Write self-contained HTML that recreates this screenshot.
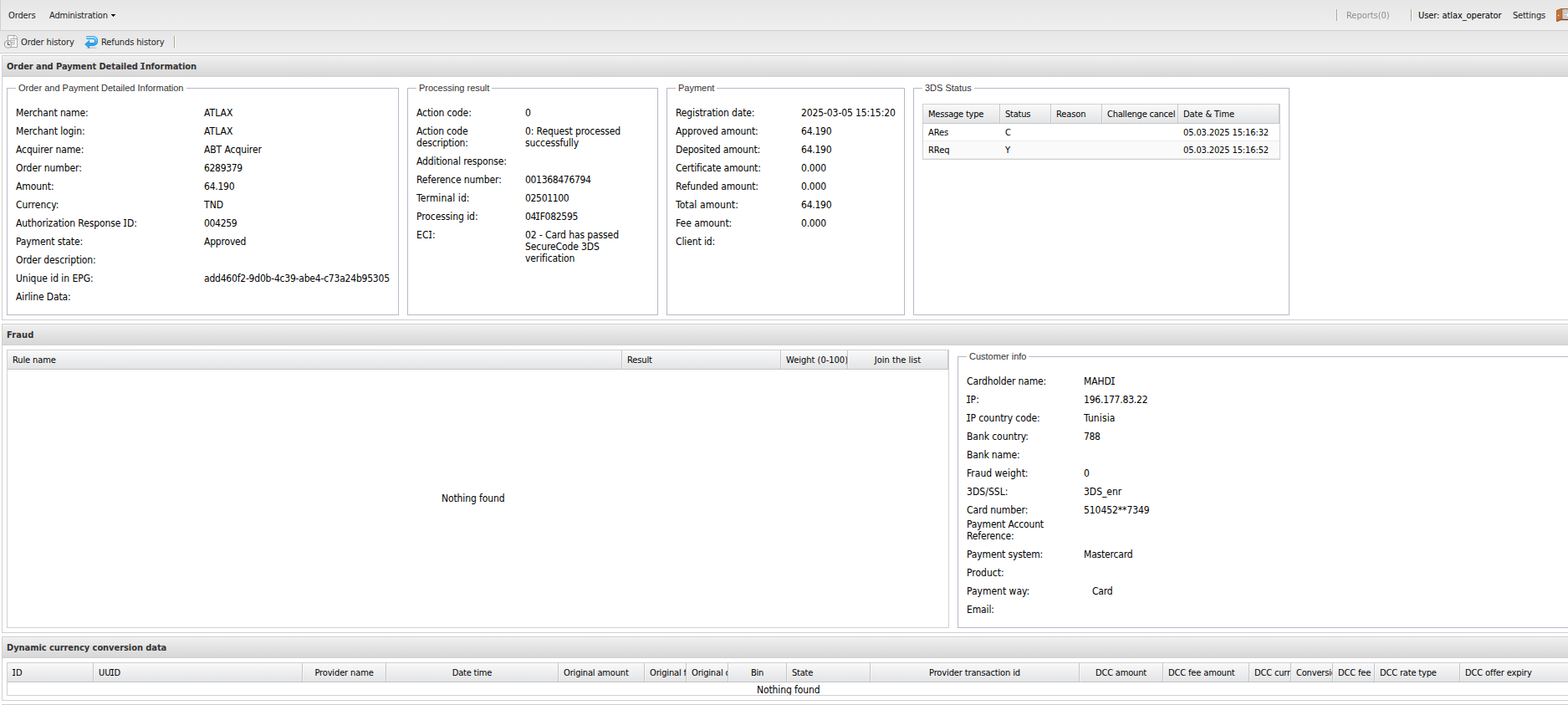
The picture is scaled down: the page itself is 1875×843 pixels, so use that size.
<!DOCTYPE html>
<html lang="en">
<head>
<meta charset="utf-8">
<title>Order and Payment Detailed Information</title>
<style>
*{box-sizing:border-box;margin:0;padding:0}
html,body{width:1875px;height:843px;overflow:hidden;background:#fff}
body{position:relative;font-family:"DejaVu Sans Condensed","Liberation Sans",sans-serif;font-size:12px;color:#000;line-height:14px;letter-spacing:-0.12px}
.abs{position:absolute}
#tb1{position:absolute;left:0;top:0;width:1875px;height:37px;border-left:1px solid #d0d0d0;border-bottom:1px solid #d0d0d0;background:linear-gradient(#e6e6e6,#efefef)}
#tb2{position:absolute;left:0;top:37px;width:1875px;height:27px;border-bottom:1px solid #d0d0d0;background:linear-gradient(#e6e6e6,#eeeeee)}
.tbt{position:absolute;font-size:11px;line-height:14px;white-space:nowrap;color:#222}
.sep{position:absolute;width:2px;height:14px;border-left:1px solid #a8a491;border-right:1px solid #fdfdfd}
.ph{position:absolute;left:2px;width:1880px;height:26px;border:1px solid #d0d0d0;background:linear-gradient(#f0f0f0,#d7d7d7);box-shadow:inset 0 1px 0 #f4f4f4}
.ph b{position:absolute;left:5px;top:5px;font-family:"DejaVu Sans Condensed","Liberation Sans",sans-serif;font-weight:bold;font-size:11px;line-height:15px;color:#333;white-space:nowrap}
.pb{position:absolute;left:2px;width:1880px;border:1px solid #d0d0d0;border-top:0;background:#fff}
.fs{position:absolute;border:1px solid #b5b8c8}
.lg{position:absolute;top:-8px;left:10px;padding:0 3px;background:#fff;font-family:"Liberation Sans",sans-serif;letter-spacing:0;font-size:11px;line-height:14px;color:#333;white-space:nowrap}
.l,.v{position:absolute;font-size:12px;line-height:14px;white-space:nowrap}
.gr{position:absolute;border:1px solid #d0d0d0;background:#fff;overflow:hidden}
.gh{position:absolute;left:0;top:0;height:23px;width:100%;border-bottom:1px solid #c5c5c5;background:linear-gradient(#f9f9f9,#e3e4e6)}
.gc{position:absolute;top:0;height:22px;border-right:1px solid #c5c5c5;box-shadow:inset 1px 0 0 rgba(255,255,255,.45);font-size:11px;line-height:24px;padding:0 6px;white-space:nowrap;overflow:hidden}
.gc.c{text-align:center}
.gc:first-child{box-shadow:none}
.row{position:absolute;left:0;width:100%;height:21px;font-size:11px;line-height:22px;border-bottom:1px solid #ededed}
.row.alt{background:#fafafa}
.row span{position:absolute;top:0;white-space:nowrap}
.I{display:inline-block;position:relative;width:.373em;text-align:center;letter-spacing:0;line-height:14px}
.I::before,.I::after{content:"";position:absolute;left:50%;margin-left:-2.1px;width:3.7px;height:1px;background:currentColor;top:2px}
.I::after{top:10px}
.gc .I,.row .I{line-height:13px}
.gc .I::after,.row .I::after{top:9px}
.gc .I::before,.gc .I::after,.row .I::before,.row .I::after{width:3.4px;margin-left:-2.2px}
.ph .I{width:.49em;line-height:15px}
.ph .I::before,.ph .I::after{width:5px;margin-left:-2.5px;top:3px}
.ph .I::after{top:10px}
.nf{position:absolute;font-size:12px;line-height:14px;white-space:nowrap}
</style>
</head>
<body>
<div id="tb1">
<span class="tbt" style="left:9px;top:12px;letter-spacing:-0.129px">Orders</span>
<span class="tbt" style="left:58px;top:12px;letter-spacing:-0.191px">Administration</span>
<span class="abs" style="left:132px;top:17px;width:5px;height:1px;background:#000"></span><span class="abs" style="left:133px;top:18px;width:3px;height:1px;background:#000"></span><span class="abs" style="left:134px;top:19px;width:1px;height:1px;background:#000"></span>
<span class="sep" style="left:1597px;top:11px"></span>
<span class="tbt" style="left:1609px;top:12px;letter-spacing:-0.028px;color:#111;opacity:.45;will-change:opacity;transform:translateZ(0)">Reports(0)</span>
<span class="sep" style="left:1686px;top:11px"></span>
<span class="tbt" style="left:1695px;top:12px;letter-spacing:-0.069px;color:#000">User: atlax_operator</span>
<span class="tbt" style="left:1808px;top:12px;letter-spacing:-0.211px">Settings</span>
<svg class="abs" style="left:1860px;top:10px" width="16" height="16" viewBox="0 0 16 16"><rect x="5.5" y="0" width="10.5" height="14" fill="#b5652a"/><rect x="6" y="13" width="10" height="1.2" fill="#7a2c22"/><rect x="7.2" y="1.2" width="8.8" height="11.6" fill="#cbcbcb"/><path d="M9.4 7.6H14.5M12.6 5.4L14.8 7.6L12.6 9.8" fill="none" stroke="#a8a8a8" stroke-width="2.4"/><path d="M9.4 7.6H14.5M12.6 5.4L14.8 7.6L12.6 9.8" fill="none" stroke="#fff" stroke-width="1.1"/><path d="M0.5 2.4L6.6 0.3V13.4L0.5 15.7Z" fill="#c47a3c" stroke="#a75c25" stroke-width="0.9" stroke-linejoin="round"/><path d="M2.5 2.2V14.6M4.5 1.5V13.9" stroke="#b56a30" stroke-width="0.6" fill="none"/><path d="M0.5 15.7L6.6 13.4V12.6L0.5 14.9Z" fill="#8f4a22"/><circle cx="2.6" cy="8.6" r="0.8" fill="#f4f4f4"/></svg>
</div>
<div id="tb2">
<svg class="abs" style="left:5px;top:5px" width="16" height="16" viewBox="0 0 16 16"><path d="M4.5 0.5H13.6L15.5 3V14.5H4.5Z" fill="#fdfdfd" stroke="#a9a9a9"/><path d="M11.6 0.8V4.4" fill="none" stroke="#b4b4b4"/><path d="M7 4.5H15M7 6.5H13M8.5 8.5H13M9.5 10.5H13" stroke="#adadad" fill="none"/><circle cx="4.6" cy="10.9" r="4.3" fill="#ecece8" stroke="#a2a2a2" stroke-width="1.15"/><path d="M4.5 8.2V11.5H7" fill="none" stroke="#555" stroke-width="1"/></svg>
<span class="tbt" style="left:25px;top:7px;letter-spacing:-0.124px">Order history</span>
<svg class="abs" style="left:101px;top:5px" width="16" height="16" viewBox="0 0 16 16"><defs><linearGradient id="rg" x1="0" y1="0" x2="0" y2="1"><stop offset="0" stop-color="#9fe3ff"/><stop offset="0.5" stop-color="#5cc0f6"/><stop offset="1" stop-color="#16a8fb"/></linearGradient></defs><ellipse cx="8.5" cy="15.4" rx="6.5" ry="0.9" fill="#000" opacity="0.16"/><path d="M2.5 2.9H10.2A4 4 0 0 1 10.2 10.9H5" fill="none" stroke="#2d8fdd" stroke-width="4" stroke-linejoin="round"/><path d="M0.5 11L5.8 6.2V15.8Z" fill="#2d8fdd" stroke="#2d8fdd" stroke-width="0.6" stroke-linejoin="round"/><path d="M3 2.9H10.2A4 4 0 0 1 10.2 10.9H5" fill="none" stroke="url(#rg)" stroke-width="2.4"/><path d="M1.9 11L5 8.2V13.8Z" fill="#22b0fc"/></svg>
<span class="tbt" style="left:121px;top:7px;letter-spacing:-0.109px">Refunds history</span>
<span class="sep" style="left:208px;top:6px"></span>
</div>
<div class="ph" style="top:66px"><b style="letter-spacing:-0.066px">Order and Payment Detailed <span class="I">I</span>nformation</b></div>
<div class="pb" style="top:92px;height:291px"></div>
<div class="fs" style="left:8px;top:105px;width:469px;height:272px"><span class="lg">Order and Payment Detailed Information</span>
<span class="l" style="left:10px;top:22px;letter-spacing:-0.127px">Merchant name:</span>
<span class="v" style="left:235px;top:22px;letter-spacing:0.050px">ATLAX</span>
<span class="l" style="left:10px;top:44px;letter-spacing:-0.100px">Merchant login:</span>
<span class="v" style="left:235px;top:44px;letter-spacing:0.050px">ATLAX</span>
<span class="l" style="left:10px;top:66px;letter-spacing:-0.114px">Acquirer name:</span>
<span class="v" style="left:235px;top:66px;letter-spacing:-0.089px">ABT Acquirer</span>
<span class="l" style="left:10px;top:88px;letter-spacing:-0.063px">Order number:</span>
<span class="v" style="left:235px;top:88px;letter-spacing:-0.315px">6289379</span>
<span class="l" style="left:10px;top:110px;letter-spacing:-0.088px">Amount:</span>
<span class="v" style="left:235px;top:110px;letter-spacing:-0.228px">64.190</span>
<span class="l" style="left:10px;top:132px;letter-spacing:-0.005px">Currency:</span>
<span class="v" style="left:235px;top:132px;letter-spacing:0.056px">TND</span>
<span class="l" style="left:10px;top:154px;letter-spacing:-0.104px">Authorization Response <span class="I">I</span>D:</span>
<span class="v" style="left:235px;top:154px;letter-spacing:-0.315px">004259</span>
<span class="l" style="left:10px;top:176px;letter-spacing:-0.118px">Payment state:</span>
<span class="v" style="left:235px;top:176px;letter-spacing:-0.191px">Approved</span>
<span class="l" style="left:10px;top:198px;letter-spacing:-0.120px">Order description:</span>
<span class="l" style="left:10px;top:220px;letter-spacing:-0.045px">Unique id in EPG:</span>
<span class="v" style="left:235px;top:220px;letter-spacing:-0.209px">add460f2-9d0b-4c39-abe4-c73a24b95305</span>
<span class="l" style="left:10px;top:242px;letter-spacing:-0.125px">Airline Data:</span>
</div>
<div class="fs" style="left:487px;top:105px;width:300px;height:272px"><span class="lg">Processing result</span>
<span class="l" style="left:10px;top:22px;letter-spacing:-0.099px">Action code:</span>
<span class="v" style="left:140px;top:22px;letter-spacing:-0.315px">0</span>
<span class="l" style="left:10px;top:44px;letter-spacing:-0.160px">Action code<br>description:</span>
<span class="v" style="left:140px;top:44px;letter-spacing:-0.104px">0: Request processed<br>successfully</span>
<span class="l" style="left:10px;top:80px;letter-spacing:-0.126px">Additional response:</span>
<span class="l" style="left:10px;top:102px;letter-spacing:-0.087px">Reference number:</span>
<span class="v" style="left:140px;top:102px;letter-spacing:-0.315px">001368476794</span>
<span class="l" style="left:10px;top:124px;letter-spacing:0.107px">Terminal id:</span>
<span class="v" style="left:140px;top:124px;letter-spacing:-0.315px">02501100</span>
<span class="l" style="left:10px;top:146px;letter-spacing:-0.076px">Processing id:</span>
<span class="v" style="left:140px;top:146px;letter-spacing:-0.276px">04<span class="I">I</span>F082595</span>
<span class="l" style="left:10px;top:168px;letter-spacing:0.064px">EC<span class="I">I</span>:</span>
<span class="v" style="left:140px;top:168px;letter-spacing:-0.100px">02 - Card has passed<br>SecureCode 3DS<br>verification</span>
</div>
<div class="fs" style="left:797px;top:105px;width:285px;height:272px"><span class="lg">Payment</span>
<span class="l" style="left:10px;top:22px;letter-spacing:-0.117px">Registration date:</span>
<span class="v" style="left:160px;top:22px;letter-spacing:-0.102px">2025-03-05 15:15:20</span>
<span class="l" style="left:10px;top:44px;letter-spacing:-0.122px">Approved amount:</span>
<span class="v" style="left:160px;top:44px;letter-spacing:-0.228px">64.190</span>
<span class="l" style="left:10px;top:66px;letter-spacing:-0.149px">Deposited amount:</span>
<span class="v" style="left:160px;top:66px;letter-spacing:-0.228px">64.190</span>
<span class="l" style="left:10px;top:88px;letter-spacing:-0.168px">Certificate amount:</span>
<span class="v" style="left:160px;top:88px;letter-spacing:-0.210px">0.000</span>
<span class="l" style="left:10px;top:110px;letter-spacing:-0.082px">Refunded amount:</span>
<span class="v" style="left:160px;top:110px;letter-spacing:-0.210px">0.000</span>
<span class="l" style="left:10px;top:132px;letter-spacing:0.089px">Total amount:</span>
<span class="v" style="left:160px;top:132px;letter-spacing:-0.228px">64.190</span>
<span class="l" style="left:10px;top:154px;letter-spacing:-0.035px">Fee amount:</span>
<span class="v" style="left:160px;top:154px;letter-spacing:-0.210px">0.000</span>
<span class="l" style="left:10px;top:176px;letter-spacing:-0.107px">Client id:</span>
</div>
<div class="fs" style="left:1092px;top:105px;width:450px;height:272px"><span class="lg">3DS Status</span></div>
<div class="gr" style="left:1103px;top:124px;width:428px;height:67px"><div class="gh">
<div class="gc" style="left:0px;width:92px;letter-spacing:-0.204px">Message type</div>
<div class="gc" style="left:92px;width:61px;letter-spacing:-0.207px">Status</div>
<div class="gc" style="left:153px;width:61px;letter-spacing:-0.102px">Reason</div>
<div class="gc" style="left:214px;width:91px;letter-spacing:-0.221px">Challenge cancel</div>
<div class="gc" style="left:305px;width:121px;letter-spacing:-0.080px">Date &amp; Time</div>
</div>
<div class="row" style="top:23px">
<span style="left:6px;letter-spacing:-0.068px">ARes</span>
<span style="left:98px;letter-spacing:-0.302px">C</span>
<span style="left:311px;letter-spacing:-0.118px">05.03.2025 15:16:32</span>
</div>
<div class="row alt" style="top:44px">
<span style="left:6px;letter-spacing:-0.025px">RReq</span>
<span style="left:98px;letter-spacing:0.294px">Y</span>
<span style="left:311px;letter-spacing:-0.118px">05.03.2025 15:16:52</span>
</div>
</div>
<div class="ph" style="top:387px"><b style="letter-spacing:0.15px">Fraud</b></div>
<div class="pb" style="top:413px;height:344px"></div>
<div class="gr" style="left:8px;top:418px;width:1127px;height:333px"><div class="gh">
<div class="gc" style="left:0px;width:735px;letter-spacing:-0.117px">Rule name</div>
<div class="gc" style="left:735px;width:190px;letter-spacing:-0.113px">Result</div>
<div class="gc" style="left:925px;width:80px;letter-spacing:-0.002px">Weight (0-100)</div>
<div class="gc c" style="left:1005px;width:120px;letter-spacing:0.020px">Join the list</div>
</div>
<span class="nf" style="left:519px;top:170px;letter-spacing:-0.108px">Nothing found</span>
</div>
<div class="fs" style="left:1145px;top:426px;width:800px;height:325px"><span class="lg">Customer info</span>
<span class="l" style="left:10px;top:22px;letter-spacing:-0.139px">Cardholder name:</span>
<span class="v" style="left:150px;top:22px;letter-spacing:-0.112px">MAHD<span class="I">I</span></span>
<span class="l" style="left:10px;top:44px;letter-spacing:0.356px"><span class="I">I</span>P:</span>
<span class="v" style="left:150px;top:44px;letter-spacing:-0.194px">196.177.83.22</span>
<span class="l" style="left:10px;top:66px;letter-spacing:-0.081px"><span class="I">I</span>P country code:</span>
<span class="v" style="left:150px;top:66px;letter-spacing:0.122px">Tunisia</span>
<span class="l" style="left:10px;top:88px;letter-spacing:-0.062px">Bank country:</span>
<span class="v" style="left:150px;top:88px;letter-spacing:-0.315px">788</span>
<span class="l" style="left:10px;top:110px;letter-spacing:-0.137px">Bank name:</span>
<span class="l" style="left:10px;top:132px;letter-spacing:-0.004px">Fraud weight:</span>
<span class="v" style="left:150px;top:132px;letter-spacing:-0.315px">0</span>
<span class="l" style="left:10px;top:154px;letter-spacing:0.064px">3DS/SSL:</span>
<span class="v" style="left:150px;top:154px;letter-spacing:-0.015px">3DS_enr</span>
<span class="l" style="left:10px;top:176px;letter-spacing:-0.085px">Card number:</span>
<span class="v" style="left:150px;top:176px;letter-spacing:-0.070px">510452**7349</span>
<span class="l" style="left:10px;top:193px;letter-spacing:-0.152px">Payment Account<br>Reference:</span>
<span class="l" style="left:10px;top:229px;letter-spacing:-0.149px">Payment system:</span>
<span class="v" style="left:150px;top:229px;letter-spacing:-0.190px">Mastercard</span>
<span class="l" style="left:10px;top:251px;letter-spacing:-0.001px">Product:</span>
<span class="l" style="left:10px;top:273px;letter-spacing:-0.006px">Payment way:</span>
<span class="v" style="left:160px;top:273px;letter-spacing:-0.192px">Card</span>
<span class="l" style="left:10px;top:295px;letter-spacing:-0.123px">Email:</span>
</div>
<div class="ph" style="top:761px"><b style="letter-spacing:-0.06px">Dynamic currency conversion data</b></div>
<div class="pb" style="top:787px;height:51px"></div>
<div class="gr" style="left:8px;top:792px;width:1900px;height:40px"><div class="gh">
<div class="gc" style="left:0px;width:103px;letter-spacing:-0.164px"><span class="I">I</span>D</div>
<div class="gc" style="left:103px;width:250px;letter-spacing:-0.074px">UU<span class="I">I</span>D</div>
<div class="gc c" style="left:353px;width:100px;letter-spacing:-0.131px">Provider name</div>
<div class="gc c" style="left:453px;width:206px;letter-spacing:-0.200px">Date time</div>
<div class="gc" style="left:659px;width:103px;letter-spacing:-0.158px">Original amount</div>
<div class="gc" style="left:762px;width:50px;letter-spacing:-0.143px">Original fee</div>
<div class="gc" style="left:812px;width:50px;letter-spacing:-0.153px">Original currency</div>
<div class="gc c" style="left:862px;width:70px;letter-spacing:-0.225px">Bin</div>
<div class="gc" style="left:932px;width:100px;letter-spacing:-0.232px">State</div>
<div class="gc c" style="left:1032px;width:250px;letter-spacing:-0.130px">Provider transaction id</div>
<div class="gc c" style="left:1282px;width:100px;letter-spacing:-0.171px">DCC amount</div>
<div class="gc" style="left:1382px;width:103px;letter-spacing:-0.143px">DCC fee amount</div>
<div class="gc" style="left:1485px;width:50px;letter-spacing:-0.161px">DCC currency</div>
<div class="gc" style="left:1535px;width:50px;letter-spacing:-0.174px">Conversion rate</div>
<div class="gc" style="left:1585px;width:50px;letter-spacing:-0.151px">DCC fee</div>
<div class="gc" style="left:1635px;width:102px;letter-spacing:-0.166px">DCC rate type</div>
<div class="gc" style="left:1737px;width:155px;letter-spacing:-0.119px">DCC offer expiry</div>
</div>
<span class="nf" style="left:896px;top:25px;letter-spacing:-0.108px">Nothing found</span>
</div>
<div class="abs" style="left:2px;top:842px;width:1880px;height:1px;background:#d0d0d0"></div>
</body>
</html>
